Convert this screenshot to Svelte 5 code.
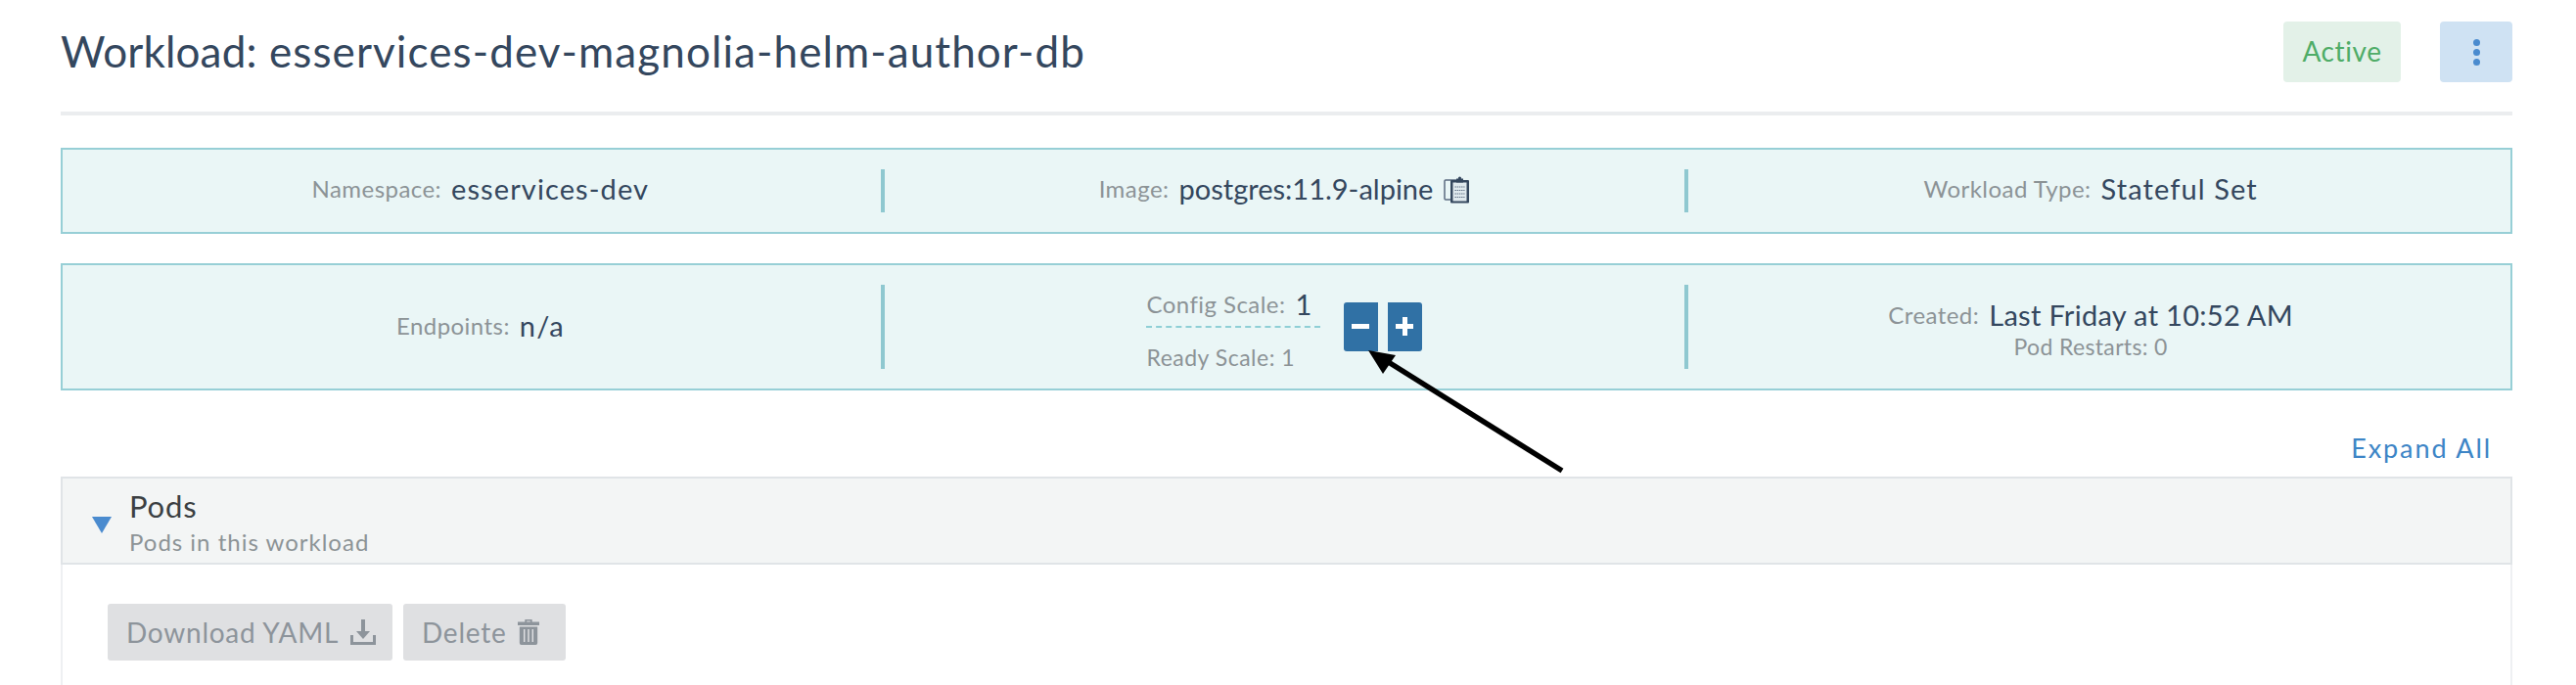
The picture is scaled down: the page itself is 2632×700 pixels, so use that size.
<script>
  const panelTop = [
    { label: 'Namespace:', value: 'esservices-dev' },
    { label: 'Image:', value: 'postgres:11.9-alpine', copy: true },
    { label: 'Workload Type:', value: 'Stateful Set' }
  ];
</script>

<div class="page">
  <header class="head">
    <h1><span class="kind">Workload:</span> esservices-dev-magnolia-helm-author-db</h1>
    <span class="badge">Active</span>
    <button class="menu" aria-label="Actions"><i></i><i></i><i></i></button>
  </header>

  <section class="panel one">
    {#each panelTop as item}
      <div class="cell">
        <span class="lab">{item.label}</span>
        <span class="val" class:tight={item.copy}>{item.value}</span>
        {#if item.copy}
          <svg class="copy" viewBox="0 0 27 28" width="27" height="28" aria-hidden="true">
            <rect x="1" y="4" width="14" height="20" rx="1" fill="#e9f6f6" stroke="#5b6b80" stroke-width="1.5"/>
            <rect x="7" y="4" width="19" height="23.5" rx="1" fill="#34475e"/>
            <rect x="9.5" y="6.5" width="14" height="19" fill="#dfe9ee"/>
            <rect x="13" y="2.5" width="7" height="4" fill="#34475e"/>
            <circle cx="16.5" cy="2" r="1.6" fill="#34475e"/>
            <path d="M11.5 11h10M11.5 14.5h10M11.5 18h10M11.5 21.5h10" stroke="#5b6b80" stroke-width="1.2" stroke-dasharray="1.4 .8"/>
          </svg>
        {/if}
      </div>
    {/each}
  </section>

  <section class="panel two">
    <div class="cell ends"><span class="lab">Endpoints:</span> <span class="val">n/a</span></div>
    <div class="cell scale">
      <div class="scales">
        <div class="cfg"><span class="lab">Config Scale:</span> <span class="val">1</span></div>
        <div class="rdy">Ready Scale: 1</div>
      </div>
      <div class="steps">
        <button aria-label="Scale down" class="minus"></button>
        <button aria-label="Scale up" class="plus"></button>
      </div>
    </div>
    <div class="cell stack">
      <div class="created"><span class="lab">Created:</span> <span class="val when">Last Friday at 10:52 AM</span></div>
      <div class="restarts">Pod Restarts: 0</div>
    </div>
  </section>

  <div class="expand"><span>Expand All</span></div>

  <section class="pods">
    <div class="pods-head">
      <span class="tri"></span>
      <div>
        <div class="pods-title">Pods</div>
        <div class="pods-sub">Pods in this workload</div>
      </div>
    </div>
    <div class="pods-body">
      <button class="ghost dl">Download YAML
        <svg viewBox="0 0 26 26" width="26" height="26" aria-hidden="true">
          <path d="M11 0h4v12h5l-7 8-7-8h5z" fill="#8d949b"/>
          <path d="M0 16h3v7h20v-7h3v10H0z" fill="#8d949b"/>
        </svg>
      </button>
      <button class="ghost del">Delete
        <svg viewBox="0 0 24 26" width="22" height="26" aria-hidden="true" preserveAspectRatio="none">
          <path d="M8 2.5V0h8v2.5h8V6H0V2.5zM10 2.5h4V1.5h-4z" fill="#8d949b" fill-rule="evenodd"/>
          <path d="M2 7.5h20V24a2 2 0 0 1-2 2H4a2 2 0 0 1-2-2zM6.5 10v13h1.6V10zM11.2 10v13h1.6V10zM15.9 10v13h1.6V10z" fill="#8d949b" fill-rule="evenodd"/>
        </svg>
      </button>
    </div>
  </section>

  <svg class="arrow" viewBox="0 0 2632 700" aria-hidden="true">
    <path d="M1596 481 L1417 369" stroke="#000" stroke-width="5.5" fill="none"/>
    <path d="M1398 358 L1426 363 L1413 382 Z" fill="#000"/>
  </svg>
</div>

<style>
  :global(body) { margin: 0; background: #fff; }
  .page {
    position: relative;
    box-sizing: border-box;
    height: 700px;
    width: 2632px;
    overflow: hidden;
    padding: 22px 65px 0 62px;
    display: flex;
    flex-direction: column;
    font-family: Lato, "Open Sans", sans-serif;
    font-weight: 400;
    color: #34475e;
  }
  .page > * { flex: none; }
  button { font-family: inherit; border: 0; padding: 0; }

  .head {
    display: flex;
    align-items: center;
    height: 96px;
    box-sizing: border-box;
    padding-bottom: 30px;
    border-bottom: 4px solid #ebedef;
  }
  h1 {
    flex: 1;
    margin: 0;
    font-size: 44px;
    font-weight: 400;
    letter-spacing: 1.1px;
    color: #34475e;
    position: relative;
    top: -1px;
  }
  .kind { letter-spacing: 0.15px; }
  .badge {
    width: 120px;
    height: 62px;
    line-height: 60px;
    text-align: center;
    font-size: 28px;
    letter-spacing: 0.6px;
    color: #4fac67;
    background: #e3f1e8;
    border-radius: 4px;
  }
  .menu {
    margin-left: 40px;
    width: 74px;
    height: 62px;
    background: #cfe2f3;
    border-radius: 4px;
    display: flex;
    flex-direction: column;
    align-items: center;
    justify-content: center;
    gap: 3px;
  }
  .menu i { width: 7px; height: 7px; border-radius: 50%; background: #4a8bcf; }

  .panel {
    box-sizing: border-box;
    display: grid;
    grid-template-columns: repeat(3, 1fr);
    padding: 20px 18px;
    background: #eaf6f6;
    border: 2px solid #97cfd6;
  }
  .one { margin-top: 33px; height: 88px; }
  .one .cell { padding-bottom: 6px; }
  .two { margin-top: 30px; height: 130px; }
  .cell {
    box-sizing: border-box;
    display: flex;
    align-items: center;
    justify-content: center;
    gap: 10px;
    border-right: 4px solid #8fc8d0;
  }
  .cell:last-child { border-right: 0; }
  .ends { padding-bottom: 3px; }
  .lab { font-size: 24px; color: #8c9396; letter-spacing: 0.45px; }
  .val { font-size: 29px; color: #34475e; letter-spacing: 1.1px; }
  .tight { letter-spacing: 0; }
  .when { letter-spacing: 0.3px; }
  .copy { margin-left: 1px; margin-top: 4px; }

  .scale { gap: 24px; }
  .scales { width: 178px; }
  .cfg {
    box-sizing: border-box;
    white-space: nowrap;
    height: 44px;
    padding-bottom: 3px;
    display: flex;
    align-items: center;
    gap: 10px;
    border-bottom: 2px dashed #8fcfd6;
  }
  .rdy {
    margin-top: 16px;
    margin-bottom: -2px;
    font-size: 23px;
    color: #8c9396;
    letter-spacing: 0.5px;
    white-space: nowrap;
  }
  .steps { display: flex; gap: 10px; }
  .steps button {
    position: relative;
    width: 35px;
    height: 50px;
    background: #3071a5;
  }
  .minus { border-radius: 3px 0 0 3px; }
  .plus { border-radius: 0 3px 3px 0; }
  .minus::after {
    content: "";
    position: absolute;
    left: 8px; top: 22px;
    width: 18px; height: 5px;
    background: #fff;
  }
  .plus::before, .plus::after {
    content: "";
    position: absolute;
    background: #fff;
  }
  .plus::before { left: 8px; top: 22px; width: 18px; height: 5px; }
  .plus::after { left: 15px; top: 15px; width: 5px; height: 19px; }

  .stack { flex-direction: column; gap: 1px; padding-top: 3px; }
  .restarts { font-size: 23px; color: #8c9396; letter-spacing: 0.35px; text-align: center; }
  .created { display: flex; align-items: center; gap: 10px; }

  .expand {
    height: 88px;
    display: flex;
    justify-content: flex-end;
    align-items: flex-start;
    padding-right: 21px;
    font-size: 27px;
    letter-spacing: 1.9px;
    color: #3d85c6;
  }
  .expand span { margin-top: 42px; }

  .pods { flex: 1 !important; display: flex; flex-direction: column; min-height: 0; }
  .pods-head {
    box-sizing: border-box;
    height: 90px;
    flex: none;
    display: flex;
    align-items: center;
    padding: 1px 30px 0;
    gap: 18px;
    background: #f3f5f5;
    border: 2px solid #e0e4e7;
  }
  .tri {
    width: 0; height: 0;
    margin-top: 7px;
    border-left: 10px solid transparent;
    border-right: 10px solid transparent;
    border-top: 17px solid #4a8bcf;
  }
  .pods-title { font-size: 31px; color: #3b3f42; line-height: 42px; letter-spacing: .8px; }
  .pods-sub { font-size: 24px; color: #8c9396; line-height: 31px; letter-spacing: 1px; }
  .pods-body {
    flex: 1;
    display: flex;
    gap: 11px;
    align-items: flex-start;
    padding: 40px 46px;
    border-left: 2px solid #eef0f2;
    border-right: 2px solid #eef0f2;
  }
  .ghost {
    box-sizing: border-box;
    height: 58px;
    display: flex;
    align-items: center;
    justify-content: flex-start;
    padding: 0 0 0 19px;
    gap: 12px;
    background: #dfe0e2;
    color: #8d949b;
    border-radius: 3px;
    font-size: 28px;
    letter-spacing: 0.75px;
    white-space: nowrap;
  }
  .ghost svg { flex: none; }
  .dl { width: 291px; }
  .del { width: 166px; }

  .arrow { position: absolute; inset: 0; width: 2632px; height: 700px; pointer-events: none; }
</style>
